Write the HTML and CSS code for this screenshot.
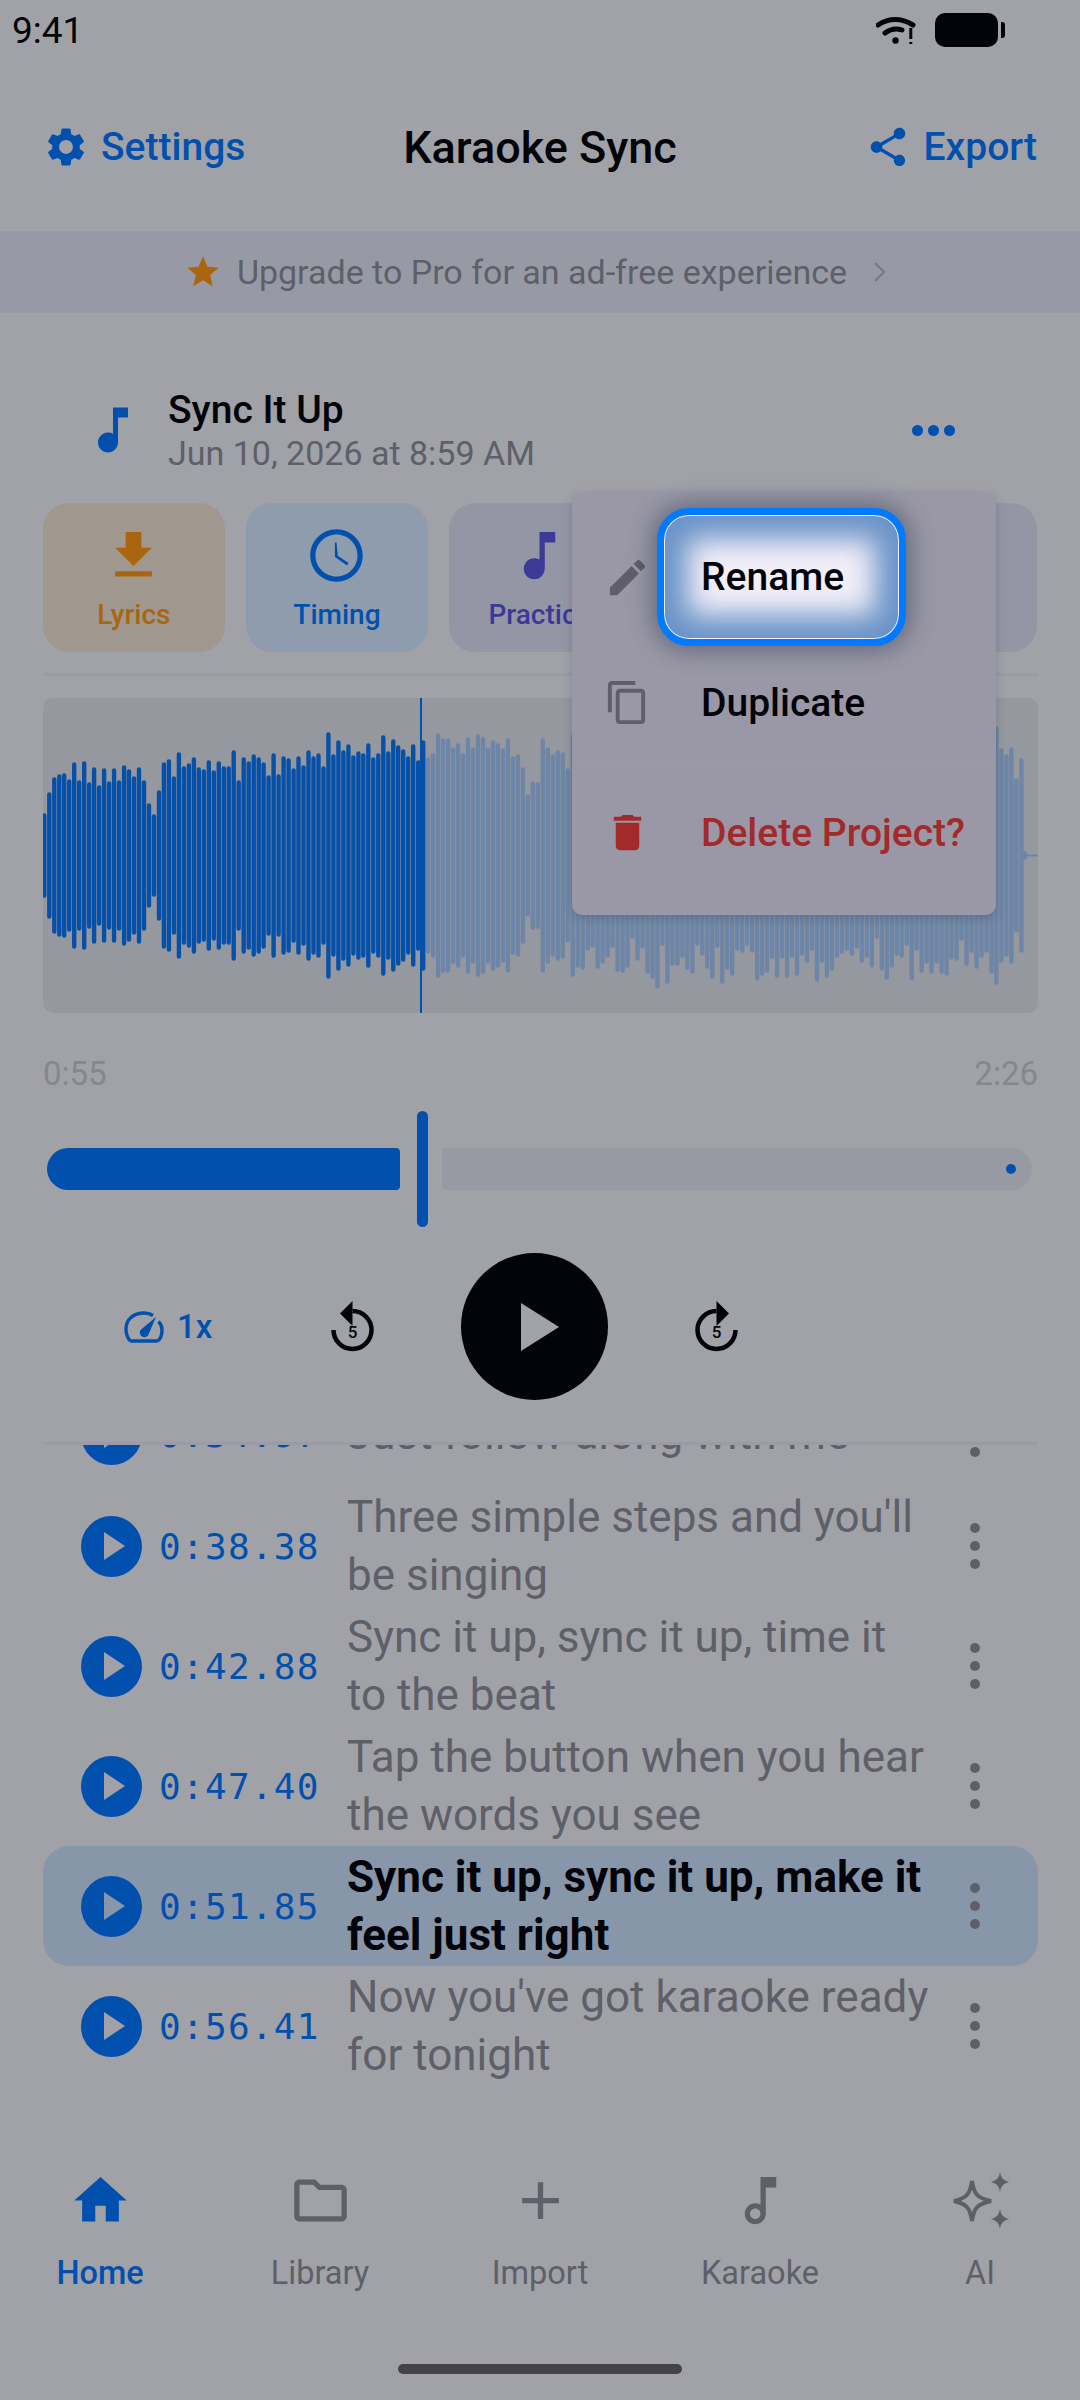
FILE: index.html
```html
<!DOCTYPE html>
<html lang="en">
<head>
    <meta charset="UTF-8">
    <meta name="viewport" content="width=device-width, initial-scale=1.0">
    <title>Karaoke Sync</title>
    <link rel="stylesheet" href="styles.css">
</head>
<body>
    <div class="status-bar">
        <span class="clock">9:41</span>
        <svg class="wifi" viewBox="0 0 40 30" width="40" height="30">
            <path d="M2 10Q19 -1 37 10" fill="none" stroke="#030409" stroke-width="5" stroke-linecap="round"/>
            <path d="M9 18Q17 12 26 15" fill="none" stroke="#030409" stroke-width="5" stroke-linecap="round"/>
            <circle cx="19.5" cy="25.5" r="3.2" fill="#030409"/>
            <path d="M34.8 13V24M34.8 27V29" fill="none" stroke="#030409" stroke-width="3"/>
        </svg>
        <span class="battery"></span>
        <span class="battery-nub"></span>
    </div>

    <header class="top-nav">
        <a class="nav-link">
            <svg viewBox="0 0 24 24" width="46" height="46"><path d="M19.14 12.94c.04-.3.06-.61.06-.94 0-.32-.02-.64-.07-.94l2.03-1.58c.18-.14.23-.41.12-.61l-1.92-3.32c-.12-.22-.37-.29-.59-.22l-2.39.96c-.5-.38-1.03-.7-1.62-.94l-.36-2.54c-.04-.24-.24-.41-.48-.41h-3.84c-.24 0-.43.17-.47.41l-.36 2.54c-.59.24-1.13.57-1.62.94l-2.39-.96c-.22-.08-.47 0-.59.22L2.74 8.87c-.12.21-.08.47.12.61l2.03 1.58c-.05.3-.09.63-.09.94s.02.64.07.94l-2.03 1.58c-.18.14-.23.41-.12.61l1.92 3.32c.12.22.37.29.59.22l2.39-.96c.5.38 1.03.7 1.62.94l.36 2.54c.05.24.24.41.48.41h3.84c.24 0 .44-.17.47-.41l.36-2.54c.59-.24 1.13-.56 1.62-.94l2.39.96c.22.08.47 0 .59-.22l1.92-3.32c.12-.22.07-.47-.12-.61l-2.01-1.58zM12 15.6c-1.98 0-3.6-1.62-3.6-3.6s1.62-3.6 3.6-3.6 3.6 1.62 3.6 3.6-1.62 3.6-3.6 3.6z"/></svg>
            Settings
        </a>
        <div class="app-title">Karaoke Sync</div>
        <a class="nav-link nav-link-right">
            <svg viewBox="0 0 24 24" width="46" height="46"><path d="M18 16.08c-.76 0-1.44.3-1.96.77L8.91 12.7c.05-.23.09-.46.09-.7s-.04-.47-.09-.7l7.05-4.11c.54.5 1.25.81 2.04.81 1.66 0 3-1.34 3-3s-1.34-3-3-3-3 1.34-3 3c0 .24.04.47.09.7L8.04 9.81C7.5 9.31 6.79 9 6 9c-1.66 0-3 1.34-3 3s1.34 3 3 3c.79 0 1.5-.31 2.04-.81l7.12 4.16c-.05.21-.08.43-.08.65 0 1.61 1.31 2.92 2.92 2.92s2.92-1.31 2.92-2.92-1.31-2.92-2.92-2.92z"/></svg>
            Export
        </a>
    </header>

    <div class="promo">
        <svg viewBox="0 0 24 24" width="38" height="38"><path fill="#a9660f" d="M12 17.27 18.18 21l-1.64-7.03L22 9.24l-7.19-.61L12 2 9.19 8.63 2 9.24l5.46 4.73L5.82 21z"/></svg>
        <span class="promo-text">Upgrade to Pro for an ad-free experience</span>
        <svg viewBox="0 0 16 24" width="16" height="24"><path d="M4 3l9 9-9 9" fill="none" stroke="#777882" stroke-width="2"/></svg>
    </div>

    <section class="project">
        <svg class="project-icon" viewBox="0 0 24 24" width="60" height="60"><path d="M12 3v10.55c-.59-.34-1.27-.55-2-.55-2.21 0-4 1.79-4 4s1.79 4 4 4 4-1.79 4-4V7h4V3h-6z"/></svg>
        <div>
            <div class="project-name">Sync It Up</div>
            <div class="project-date">Jun 10, 2026 at 8:59 AM</div>
        </div>
        <div class="more-dots"><i></i><i></i><i></i></div>
    </section>

    <div class="tabs">
        <div class="tab tab-lyrics">
            <svg viewBox="0 0 24 24" width="63" height="63"><path d="M19 9h-4V3H9v6H5l7 7 7-7zM5 18v2h14v-2H5z"/></svg>
            <span>Lyrics</span>
        </div>
        <div class="tab tab-timing">
            <svg viewBox="0 0 24 24" width="63" height="63"><path d="M11.99 2C6.47 2 2 6.48 2 12s4.47 10 9.99 10C17.52 22 22 17.52 22 12S17.52 2 11.99 2zM12 20c-4.42 0-8-3.58-8-8s3.58-8 8-8 8 3.58 8 8-3.58 8-8 8z"/><path d="M12 7h-.6v5.6l4.6 3.2.6-.9-4.1-2.8z"/></svg>
            <span>Timing</span>
        </div>
        <div class="tab tab-practice">
            <svg viewBox="0 0 24 24" width="63" height="63"><path d="M12 3v10.55c-.59-.34-1.27-.55-2-.55-2.21 0-4 1.79-4 4s1.79 4 4 4 4-1.79 4-4V7h4V3h-6z"/></svg>
            <span>Practice</span>
        </div>
        <div class="tab"></div>
        <div class="tab"></div>
    </div>

    <div class="divider tabs-divider"></div>

    <div class="waveform">
        <svg id="wave" viewBox="0 0 995 315" width="995" height="315"></svg>
        <div class="playhead"></div>
    </div>

    <div class="times">
        <span>0:55</span>
        <span>2:26</span>
    </div>

    <div class="scrubber">
        <div class="scrub-played"></div>
        <div class="scrub-thumb"></div>
        <div class="scrub-rest"><i></i></div>
    </div>

    <div class="controls">
        <div class="speed">
            <svg viewBox="0 0 40 32" width="40" height="32">
                <path d="M6 30C3 26 2 22 2 18 2 8 10 2 20 2c3.500 0 6.500.8 9 2.500M34.500 10.500C37 13 38 16 38 19c0 4-1 8-4 11M6 30h28" fill="none" stroke="#0250ad" stroke-width="3.4"/>
                <path d="M32 6 24.500 23.500a4.600 4.600 0 1 1-8-4.500z" fill="#0250ad"/>
            </svg>
            <span>1x</span>
        </div>
        <svg class="skip" viewBox="0 0 43 52" width="43" height="52">
            <path d="M21.500 10A19 19 0 1 1 2.500 29" fill="none" stroke="#030409" stroke-width="4.500"/>
            <path d="M21.500 0 9 12.500 21.500 25z" fill="#030409"/>
            <text x="21.500" y="37" text-anchor="middle">5</text>
        </svg>
        <div class="play-big">
            <svg viewBox="0 0 38 48" width="38" height="48"><path d="M0 0 38 24 0 48z" fill="#a1a2a7"/></svg>
        </div>
        <svg class="skip" viewBox="0 0 43 52" width="43" height="52">
            <path d="M21.500 10A19 19 0 1 0 40.500 29" fill="none" stroke="#030409" stroke-width="4.500"/>
            <path d="M21.500 0 34 12.500 21.500 25z" fill="#030409"/>
            <text x="21.500" y="37" text-anchor="middle">5</text>
        </svg>
    </div>

    <div class="divider list-divider"></div>

    <div class="lyric-list">
        <div class="lyric-scroll">
            <div class="lyric-row lyric-row-short">
                <div class="row-play"><b></b></div>
                <span class="row-time">0:34.97</span>
                <p class="row-text">Just follow along with me</p>
                <div class="row-more"><i></i><i></i><i></i></div>
            </div>
            <div class="lyric-row">
                <div class="row-play"><b></b></div>
                <span class="row-time">0:38.38</span>
                <p class="row-text">Three simple steps and you'll be singing</p>
                <div class="row-more"><i></i><i></i><i></i></div>
            </div>
            <div class="lyric-row">
                <div class="row-play"><b></b></div>
                <span class="row-time">0:42.88</span>
                <p class="row-text">Sync it up, sync it up, time it to the beat</p>
                <div class="row-more"><i></i><i></i><i></i></div>
            </div>
            <div class="lyric-row">
                <div class="row-play"><b></b></div>
                <span class="row-time">0:47.40</span>
                <p class="row-text">Tap the button when you hear the words you see</p>
                <div class="row-more"><i></i><i></i><i></i></div>
            </div>
            <div class="lyric-row active">
                <div class="row-play"><b></b></div>
                <span class="row-time">0:51.85</span>
                <p class="row-text">Sync it up, sync it up, make it feel just right</p>
                <div class="row-more"><i></i><i></i><i></i></div>
            </div>
            <div class="lyric-row">
                <div class="row-play"><b></b></div>
                <span class="row-time">0:56.41</span>
                <p class="row-text">Now you've got karaoke ready for tonight</p>
                <div class="row-more"><i></i><i></i><i></i></div>
            </div>
        </div>
    </div>

    <nav class="bottom-nav">
        <div class="nav-item current">
            <svg viewBox="0 0 24 24" width="63" height="63"><path d="M10 20v-6h4v6h5v-8h3L12 3 2 12h3v8z"/></svg>
            <span>Home</span>
        </div>
        <div class="nav-item">
            <svg viewBox="0 0 24 24" width="63" height="63"><path d="M9.170 6l2 2H20v10H4V6h5.170M10 4H4c-1.100 0-1.990.9-1.990 2L2 18c0 1.100.9 2 2 2h16c1.100 0 2-.9 2-2V8c0-1.100-.9-2-2-2h-8l-2-2z"/></svg>
            <span>Library</span>
        </div>
        <div class="nav-item">
            <svg viewBox="0 0 24 24" width="63" height="63"><path d="M19 13h-6v6h-2v-6H5v-2h6V5h2v6h6v2z"/></svg>
            <span>Import</span>
        </div>
        <div class="nav-item">
            <svg viewBox="0 0 24 24" width="63" height="63"><path d="M12 3l.01 10.550c-.59-.34-1.270-.55-2.010-.55C7.790 13 6 14.790 6 17s1.790 4 4.010 4S14 19.210 14 17V7h4V3h-6zm-1.990 16c-1.100 0-2-.9-2-2s.9-2 2-2 2 .9 2 2-.9 2-2 2z"/></svg>
            <span>Karaoke</span>
        </div>
        <div class="nav-item">
            <svg viewBox="0 0 63 63" width="63" height="63">
                <path d="M23 12C25 25 28 29 42 32 28 35 25 39 23 52 21 39 18 35 5 32 18 29 21 25 23 12Z" fill="none" stroke="#5e5f69" stroke-width="4"/>
                <path d="M51 3C52 9 54 11 60 13 54 15 52 17 51 23 50 17 48 15 42 13 48 11 50 9 51 3Z"/>
                <path d="M51 40C52 46 54 48 60 50 54 52 52 54 51 60 50 54 48 52 42 50 48 48 50 46 51 40Z"/>
            </svg>
            <span>AI</span>
        </div>
    </nav>

    <div class="home-bar"></div>

    <div class="menu">
        <div class="menu-row menu-row-first">
            <svg viewBox="0 0 24 24" width="47" height="47"><path d="M3 17.250V21h3.750L17.810 9.940l-3.750-3.750L3 17.250zM20.710 7.040c.39-.39.39-1.020 0-1.410l-2.340-2.340c-.39-.39-1.020-.39-1.410 0l-1.830 1.830 3.750 3.750 1.830-1.830z"/></svg>
            <div class="menu-label focused">Rename</div>
        </div>
        <div class="menu-row menu-row-copy">
            <svg viewBox="0 0 24 24" width="47" height="47"><path d="M16 1H4c-1.100 0-2 .9-2 2v14h2V3h12V1zm3 4H8c-1.100 0-2 .9-2 2v14c0 1.100.9 2 2 2h11c1.100 0 2-.9 2-2V7c0-1.100-.9-2-2-2zm0 16H8V7h11v14z"/></svg>
            <div class="menu-label">Duplicate</div>
        </div>
        <div class="menu-row menu-row-delete">
            <svg viewBox="0 0 24 24" width="47" height="47"><path d="M6 19c0 1.100.9 2 2 2h8c1.100 0 2-.9 2-2V7H6v12zM19 4h-3.500l-1-1h-5l-1 1H5v2h14V4z"/></svg>
            <div class="menu-label">Delete Project?</div>
        </div>
    </div>

    <script src="waveform.js"></script>
</body>
</html>
```

FILE: styles.css
```css
* {
    box-sizing: border-box;
}
body {
    position: relative;
    width: 1080px;
    height: 2400px;
    margin: 0;
    overflow: hidden;
    display: flex;
    flex-direction: column;
    background-color: #a1a2a7;
    color: #030409;
    font-family: Roboto, "Noto Sans", sans-serif;
}
svg {
    display: block;
    flex-shrink: 0;
}

/* status bar */
.status-bar {
    position: relative;
    display: flex;
    align-items: center;
    height: 60px;
    padding-left: 12px;
}
.clock {
    flex: 1;
    font-size: 37px;
}
.wifi {
    margin-right: 19px;
}
.battery {
    width: 63px;
    height: 34px;
    background-color: #030409;
    border-radius: 10px;
}
.battery-nub {
    width: 4px;
    height: 16px;
    margin: 0 75px 0 3px;
    background-color: #030409;
    border-radius: 0 3px 3px 0;
}

/* top nav */
.top-nav {
    display: grid;
    grid-template-columns: 1fr auto 1fr;
    align-items: center;
    height: 171px;
    padding: 3px 43px 0;
}
.nav-link {
    display: flex;
    align-items: center;
    gap: 12px;
    color: #0250ad;
    fill: #0250ad;
    font-size: 39px;
    font-weight: 500;
}
.nav-link-right {
    justify-content: flex-end;
    gap: 13px;
}
.app-title {
    font-size: 45px;
    font-weight: 500;
}

.promo {
    display: flex;
    align-items: center;
    justify-content: center;
    gap: 15px;
    height: 82px;
    padding-right: 9px;
    background-color: #979aa4;
}
.promo-text {
    margin-right: 9px;
    color: #5e5f69;
    font-size: 34px;
}

/* project row */
.project {
    display: flex;
    align-items: center;
    gap: 25px;
    height: 190px;
    padding: 44px 125px 0 83px;
}
.project-icon {
    fill: #0250ad;
}
.project-name {
    height: 44px;
    font-size: 39px;
    font-weight: 500;
    line-height: 44px;
}
.project-date {
    height: 40px;
    margin-top: 1px;
    color: #5e5f69;
    font-size: 34px;
    line-height: 40px;
}
.more-dots {
    display: flex;
    gap: 5px;
    margin-left: auto;
}
.more-dots i {
    width: 11px;
    height: 11px;
    border-radius: 50%;
    background-color: #0250ad;
}

/* mode tabs */
.tabs {
    display: flex;
    gap: 21.25px;
    padding: 0 43px;
}
.tab {
    display: flex;
    flex-direction: column;
    align-items: center;
    width: 182px;
    height: 149px;
    padding-top: 21px;
    border-radius: 26px;
    background-color: #9596a5;
    font-size: 28px;
    font-weight: 500;
}
.tab span {
    margin-top: 10px;
    line-height: 36px;
}
.tab-lyrics {
    background-color: #a0978f;
    color: #a9660f;
    fill: #a9660f;
}
.tab-timing {
    background-color: #8f9cae;
    color: #0250ad;
    fill: #0250ad;
}
.tab-practice {
    color: #3c3a96;
    fill: #3c3a96;
}

.divider {
    height: 3px;
    margin: 0 42px 0 43px;
    background-color: #9a9ba6;
}
.tabs-divider {
    margin-top: 21px;
}

/* waveform */
.waveform {
    position: relative;
    height: 315px;
    margin: 22px 42px 0 43px;
    border-radius: 10px;
    background-color: #96989f;
    overflow: hidden;
}
.playhead {
    position: absolute;
    top: 0;
    left: 377px;
    width: 2px;
    height: 100%;
    background-color: #0250ad;
}

.times {
    display: flex;
    justify-content: space-between;
    height: 46px;
    margin: 38px 42px 0 43px;
    color: #85868f;
    font-size: 33px;
    line-height: 46px;
}

/* scrubber */
.scrubber {
    display: flex;
    align-items: center;
    height: 116px;
    margin: 14px 48px 0 47px;
}
.scrub-played {
    width: 353px;
    height: 42px;
    background-color: #0250ad;
    border-radius: 21px 4px 4px 21px;
}
.scrub-thumb {
    width: 11px;
    height: 116px;
    margin: 0 14px 0 17px;
    background-color: #0250ad;
    border-radius: 6px;
}
.scrub-rest {
    display: flex;
    align-items: center;
    justify-content: flex-end;
    flex: 1;
    height: 42px;
    padding-right: 16px;
    background-color: #9799a3;
    border-radius: 4px 21px 21px 4px;
}
.scrub-rest i {
    width: 10px;
    height: 10px;
    border-radius: 50%;
    background-color: #0250ad;
}

/* transport */
.controls {
    display: flex;
    align-items: center;
    gap: 87px;
    margin-top: 26px;
    padding-left: 124px;
}
.speed {
    display: flex;
    align-items: center;
    gap: 13px;
    width: 120px;
    color: #0250ad;
    font-size: 33px;
    font-weight: 500;
}
.skip text {
    fill: #030409;
    font-family: Roboto, sans-serif;
    font-size: 17px;
    font-weight: 500;
}
.play-big {
    display: flex;
    align-items: center;
    justify-content: center;
    width: 147px;
    height: 147px;
    padding-left: 11px;
    border-radius: 50%;
    background-color: #030409;
}
.list-divider {
    margin-top: 42px;
}

/* lyric list */
.lyric-list {
    flex: 1;
    min-height: 0;
    overflow: hidden;
    padding: 0 42px 0 43px;
}
.lyric-scroll {
    margin-top: -63px;
}
.lyric-row {
    display: flex;
    align-items: center;
    height: 120px;
    padding-left: 38px;
    border-radius: 26px;
}
.lyric-row-short {
    height: 104px;
}
.lyric-row.active {
    background-color: #8896aa;
}
.row-play {
    display: flex;
    align-items: center;
    justify-content: center;
    flex-shrink: 0;
    width: 61px;
    height: 61px;
    padding-left: 5px;
    border-radius: 50%;
    background-color: #0250ad;
}
.row-play b {
    width: 0;
    height: 0;
    border-left: 21px solid #a1a2a7;
    border-top: 14px solid transparent;
    border-bottom: 14px solid transparent;
}
.active .row-play b {
    border-left-color: #8896aa;
}
.row-time {
    flex-shrink: 0;
    width: 188px;
    margin-left: 17px;
    color: #0250ad;
    font-family: "DejaVu Sans Mono", "Liberation Mono", monospace;
    font-size: 36px;
    letter-spacing: 1.3px;
}
.row-text {
    width: 585px;
    margin: 0;
    color: #5e5f69;
    font-size: 44px;
    line-height: 58px;
}
.active .row-text {
    color: #030409;
    font-weight: 700;
}
.row-more {
    display: flex;
    flex-direction: column;
    gap: 8px;
    margin-left: 38px;
}
.row-more i {
    width: 10px;
    height: 10px;
    border-radius: 50%;
    background-color: #5e5f69;
}

/* bottom nav */
.bottom-nav {
    display: flex;
    justify-content: space-between;
    padding: 9px 40px 0;
}
.nav-item {
    display: flex;
    flex-direction: column;
    align-items: center;
    width: 120px;
    color: #5e5f69;
    fill: #5e5f69;
    font-size: 32.5px;
}
.nav-item span {
    margin-top: 23px;
    line-height: 36px;
}
.nav-item.current {
    color: #0250ad;
    fill: #0250ad;
    font-weight: 500;
}
.home-bar {
    width: 284px;
    height: 10px;
    margin: 73px auto 26px;
    border-radius: 5px;
    background-color: #434348;
}

/* popup menu over the page */
.menu {
    position: absolute;
    top: 492px;
    left: 572px;
    width: 424px;
    height: 423px;
    padding-top: 16px;
    border-radius: 10px;
    background-color: #9a98a6;
    box-shadow: 0 3px 8px rgba(40, 50, 80, 0.25);
    fill: #5e5f69;
}
.menu-row {
    display: flex;
    align-items: center;
    padding-left: 32px;
}
.menu-row-first {
    height: 138px;
}
.menu-row-copy {
    height: 121px;
    padding-bottom: 8px;
}
.menu-row-delete {
    height: 130px;
    border-top: 1px solid #9c9ca9;
    fill: #a32a2a;
    color: #a32a2a;
}
.menu-label {
    padding-left: 50px;
    font-size: 39px;
    font-weight: 500;
    line-height: 46px;
}
.menu-label.focused {
    display: flex;
    align-items: center;
    width: 249px;
    height: 138px;
    margin-left: 6px;
    padding-left: 37px;
    border: 7px solid #007aff;
    border-radius: 32px;
    background-color: #f3eff8;
    box-shadow: inset 0 0 0 1px #f3eff8, inset 0 0 28px 24px #6a93c8, 0 0 22px 6px rgba(45, 55, 85, 0.45);
}
```

FILE: waveform.js
```js
// half heights of the bars, in px, measured from the middle line
const played = [
    42, 63, 78, 81, 82, 76, 93, 75, 94, 73, 88, 70, 87, 74, 87, 75, 90, 86, 79, 88,
    75, 52, 41, 65, 93, 96, 79, 103, 89, 92, 98, 88, 86, 95, 85, 94, 89, 89, 105, 75,
    98, 94, 101, 98, 93, 80, 102, 81, 99, 97, 87, 99, 90, 105, 99, 102, 89, 123, 101, 115,
    105, 111, 100, 104, 102, 112, 98, 102, 120, 104, 116, 110, 106, 99, 111, 95, 115
];
const rest = [
    98, 102, 122, 117, 117, 108, 112, 102, 118, 108, 121, 118, 108, 115, 112, 107, 117, 99, 101, 88,
    61, 74, 73, 117, 108, 101, 105, 103, 87, 121, 112, 114, 95, 92, 113, 108, 102, 92, 116, 117,
    112, 83, 105, 93, 118, 123, 133, 90, 128, 110, 110, 102, 114, 118, 90, 100, 113, 123, 92, 128,
    114, 120, 95, 97, 90, 97, 125, 120, 117, 103, 122, 103, 122, 102, 120, 100, 107, 95, 126, 107,
    122, 115, 102, 98, 95, 100, 93, 107, 102, 112, 83, 115, 124, 112, 100, 102, 90, 125, 95, 117,
    108, 118, 108, 118, 120, 104, 105, 85, 110, 97, 113, 102, 97, 118, 129, 107, 101, 108, 77, 97
];

const MID = 157.5;
const STEP = 4.985;

function barsPath(heights, startIndex) {
    return heights.map((h, i) => {
        const x = (1.3 + STEP * (startIndex + i)).toFixed(1);
        return `M${x} ${MID - h + 2}V${MID + h - 2}`;
    }).join('');
}

function addPath(d, color, width) {
    const path = document.createElementNS('http://www.w3.org/2000/svg', 'path');
    path.setAttribute('d', d);
    path.setAttribute('fill', 'none');
    path.setAttribute('stroke', color);
    path.setAttribute('stroke-width', width);
    path.setAttribute('stroke-linecap', 'round');
    document.getElementById('wave').appendChild(path);
}

addPath(barsPath(rest, played.length) + `M982 ${MID - 2}V${MID + 2}`, '#6d85a6', 4.4);
addPath(`M982 ${MID}H995`, '#6d85a6', 2);
addPath(barsPath(played, 0), '#0750a8', 4.4);
```
